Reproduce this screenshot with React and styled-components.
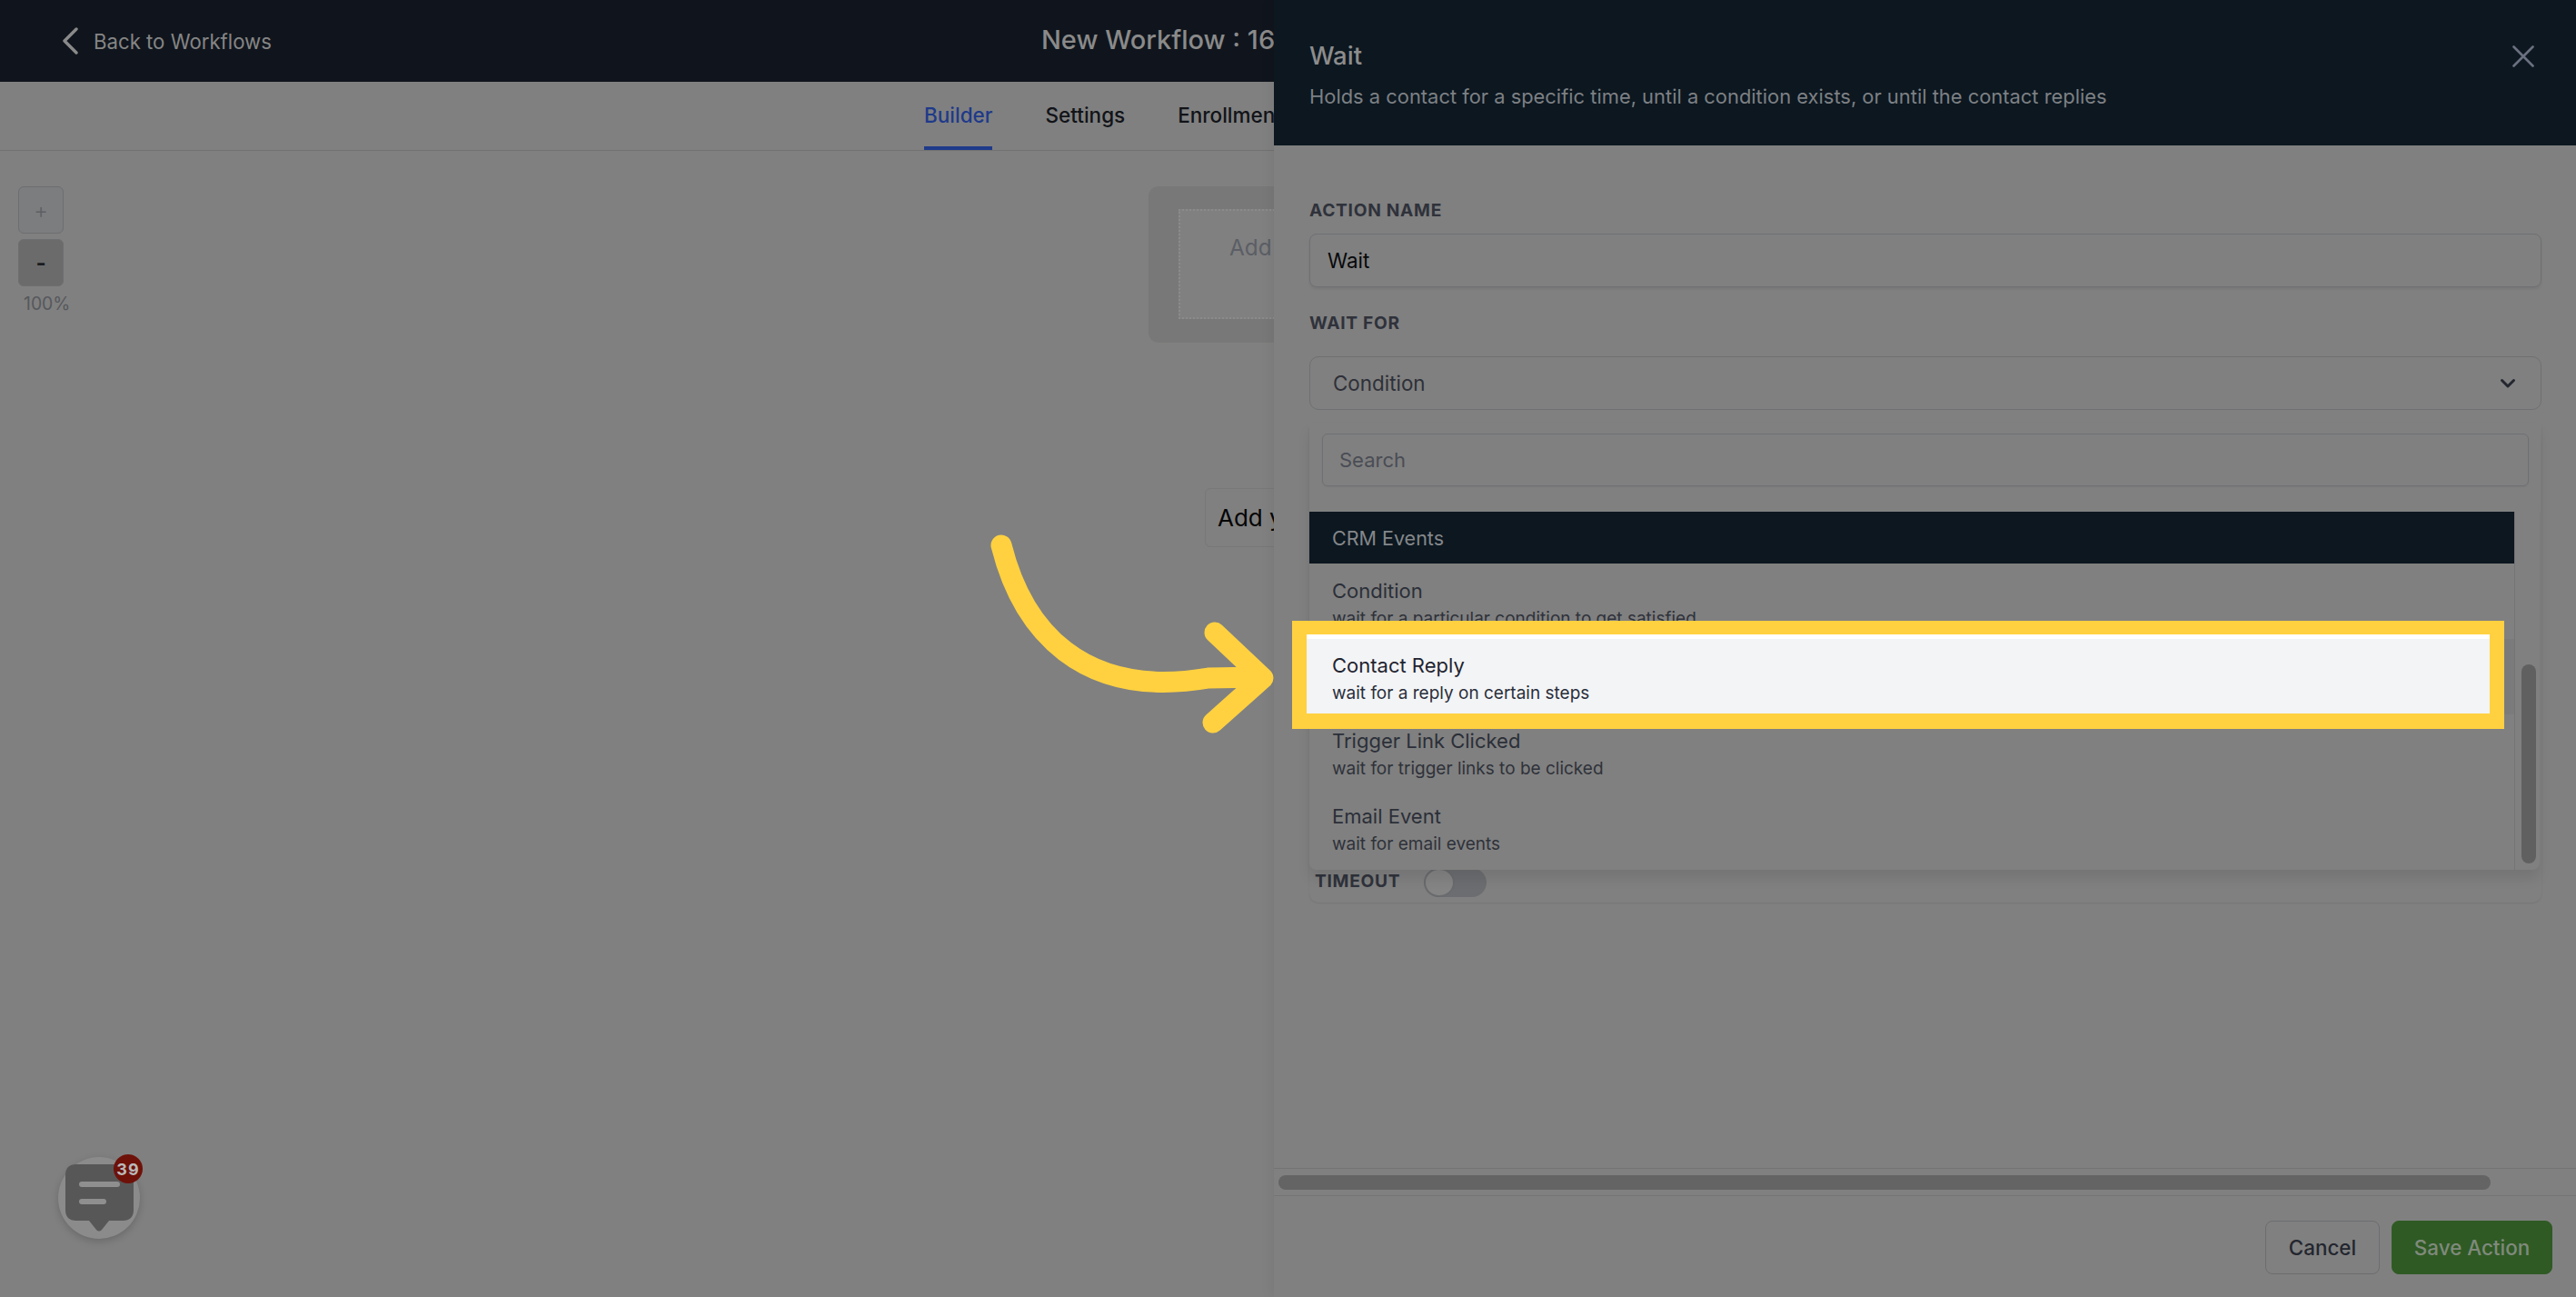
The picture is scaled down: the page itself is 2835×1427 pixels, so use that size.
import React from "react";
import styled, { createGlobalStyle } from "styled-components";

const dim = "#808080";
const navy = "#0c1720";
const ink = "#2b2f38";
const line = "#6f7074";
const yellow = "#ffd140";

const GlobalStyle = createGlobalStyle`
    html, body {
        margin: 0;
        padding: 0;
        background: ${dim};
        overflow: hidden;
    }
    * {
        box-sizing: border-box;
    }
    body {
        font-family: Inter, "Liberation Sans", sans-serif;
    }
`;

const Page = styled.div`
    position: relative;
    display: flex;
    width: 2835px;
    height: 1427px;
    overflow: hidden;
    background: ${dim};
`;

/* left side: the builder, cut off by the drawer */
const Builder = styled.div`
    position: relative;
    display: flex;
    flex-direction: column;
    flex: 0 0 1402px;
    overflow: hidden;
    white-space: nowrap;
`;
const TopBar = styled.div`
    display: flex;
    align-items: center;
    flex: 0 0 90px;
    padding-left: 68px;
    background: #10151d;
`;
const BackLink = styled.div`
    display: flex;
    align-items: center;
    gap: 17px;
    font-size: 22.2px;
    color: #858585;
`;
const WorkflowName = styled.div`
    margin-left: 847px;
    margin-top: -4px;
    font-size: 29px;
    font-weight: 500;
    color: #8a8a8a;
`;
const Tabs = styled.div`
    display: flex;
    flex: 0 0 76px;
    gap: 58px;
    padding-left: 1017px;
    border-bottom: 1px solid #717171;
`;
const Tab = styled.div`
    display: flex;
    align-items: center;
    height: 75px;
    margin-bottom: -1px;
    padding-top: 2px;
    font-size: 22.5px;
    font-weight: 500;
    color: ${props => props.active ? "#1e3a8a" : "#111318"};
    border-bottom: 4px solid ${props => props.active ? "#1e3a8a" : "transparent"};
`;
const Canvas = styled.div`
    position: relative;
    flex: 1;
    display: flex;
    flex-direction: column;
    align-items: flex-start;
    padding: 39px 0 0 20px;
`;
const ZoomButton = styled.div`
    display: flex;
    align-items: center;
    justify-content: center;
    width: 50px;
    height: 52px;
    margin-bottom: 6px;
    border: 1px solid #6d6e70;
    border-radius: 6px;
    font-size: 24px;
    font-weight: ${props => props.active ? 700 : 300};
    color: ${props => props.active ? "#1a1c20" : "#5d5f63"};
    background: ${props => props.active ? "#6b6b6c" : "#7c7d7f"};
`;
const ZoomLabel = styled.div`
    margin: 1px 0 0 6px;
    font-size: 19.4px;
    color: #56585c;
`;
const StartNode = styled.div`
    position: absolute;
    left: 1264px;
    top: 39px;
    width: 220px;
    height: 172px;
    padding: 25px 33px;
    border-radius: 11px;
    background: #787879;
`;
const StartInner = styled.div`
    height: 121px;
    padding: 25px 0 0 54px;
    border: 2px dotted #8b8b8c;
    font-size: 24.3px;
    color: #5b5e65;
    background: #808080;
`;
const AddAction = styled.div`
    position: absolute;
    left: 1326px;
    top: 371px;
    width: 140px;
    height: 65px;
    display: flex;
    align-items: center;
    padding-left: 13px;
    border: 1px solid #787878;
    border-radius: 6px;
    font-size: 26px;
    color: #050505;
`;

/* right side: the drawer */
const Drawer = styled.div`
    display: flex;
    flex-direction: column;
    flex: 1;
    height: 1427px;
    background: ${dim};
    box-shadow: -4px 0 12px rgba(0, 0, 0, 0.05);
    z-index: 1;
`;
const DrawerHead = styled.div`
    position: relative;
    flex: 0 0 160px;
    padding: 43px 39px 0;
    background: ${navy};
`;
const DrawerTitle = styled.div`
    font-size: 27.5px;
    font-weight: 500;
    line-height: 36px;
    color: #8c8c8c;
`;
const DrawerSub = styled.div`
    margin-top: 11px;
    font-size: 21.9px;
    line-height: 32px;
    color: #7d8084;
`;
const CloseIcon = styled.svg`
    position: absolute;
    right: 46px;
    top: 50px;
`;
const DrawerBody = styled.div`
    flex: 1;
    padding: 59px 38px 0 39px;
`;
const FieldLabel = styled.div`
    margin-bottom: ${props => props.gap}px;
    font-size: 19.2px;
    font-weight: 700;
    line-height: 24px;
    letter-spacing: 0.7px;
    color: #2f323b;
`;
const TextField = styled.div`
    display: flex;
    align-items: center;
    height: 59px;
    margin-bottom: 27px;
    padding-left: 19px;
    border: 1px solid ${line};
    border-radius: 8px;
    font-size: 22.4px;
    color: #08090b;
    box-shadow: 0 2px 3px rgba(0, 0, 0, 0.08);
`;
const SelectWrap = styled.div`
    position: relative;
`;
const SelectBox = styled.div`
    display: flex;
    align-items: center;
    justify-content: space-between;
    height: 59px;
    padding: 0 27px 0 25px;
    border: 1px solid ${line};
    border-radius: 10px;
    font-size: 22.4px;
    color: #2e3038;
`;
const Dropdown = styled.div`
    position: absolute;
    left: 0;
    right: 2px;
    top: 73px;
    height: 492px;
    display: flex;
    border-radius: 0 0 8px 8px;
    background: ${dim};
    box-shadow: 0 10px 14px rgba(0, 0, 0, 0.09);
    z-index: 2;
`;
const DropdownList = styled.div`
    flex: 1;
    display: flex;
    flex-direction: column;
    min-width: 0;
`;
const SearchRow = styled.div`
    display: flex;
    flex-direction: column;
    flex: 0 0 98px;
    width: 1355px;
    padding: 12px 0 0 14px;
    background: ${dim};
    z-index: 1;
`;
const SearchBox = styled.div`
    display: flex;
    align-items: center;
    height: 58px;
    margin-right: 13px;
    padding-left: 18px;
    border: 1px solid ${line};
    border-radius: 6px;
    font-size: 22px;
    color: #4a4d55;
    box-shadow: 0 1px 2px rgba(0, 0, 0, 0.06);
`;
const GroupHead = styled.div`
    display: flex;
    align-items: center;
    flex: 0 0 57px;
    padding-left: 25px;
    font-size: 21.5px;
    color: #84878a;
    background: ${navy};
`;
const Option = styled.div`
    position: relative;
    flex: 0 0 83px;
    padding: ${props => props.first ? 17 : 16}px 0 0 25px;
    background: ${props => props.hover ? "#7b7b7b" : "transparent"};
`;
const OptionTitle = styled.div`
    position: relative;
    font-size: 22px;
    line-height: 27px;
    color: ${props => props.lit ? "#1f2430" : ink};
`;
const OptionHint = styled.div`
    position: relative;
    margin-top: 5px;
    font-size: 19px;
    line-height: 24px;
    color: ${props => props.lit ? "#2a2f3b" : "#2f323a"};
`;
/* tutorial highlight that sits over the hovered row */
const Spotlight = styled.div`
    position: absolute;
    left: -19px;
    top: -20px;
    width: 1334px;
    height: 119px;
    border: solid ${yellow};
    border-width: 15px 16px 17px;
    background: #f3f4f6;
    box-shadow: inset 0 5px 0 #ffffff;
`;
const ScrollTrack = styled.div`
    flex: 0 0 27px;
    margin-top: 98px;
    padding: 168px 4px 0 7px;
    border-left: 1px solid #747474;
`;
const ScrollThumb = styled.div`
    width: 16px;
    height: 219px;
    border-radius: 8px;
    background: #606060;
`;
const TimeoutCard = styled.div`
    display: flex;
    align-items: flex-end;
    gap: 26px;
    height: 524px;
    margin-top: 18px;
    padding: 0 0 6px 6px;
    border-radius: 0 0 10px 10px;
    box-shadow: 0 1px 2px rgba(0, 0, 0, 0.09);
    font-size: 19.2px;
    font-weight: 700;
    letter-spacing: 0.7px;
    color: #2f323b;
`;
const TimeoutLabel = styled.div`
    margin-bottom: 6px;
`;
const ToggleTrack = styled.div`
    display: flex;
    width: 69px;
    height: 32px;
    border-radius: 16px;
    background: #6c6d70;
`;
const ToggleKnob = styled.div`
    width: 34px;
    height: 32px;
    border: 2px solid #6a6b6e;
    border-radius: 50%;
    background: #848484;
`;
const HScrollTrack = styled.div`
    flex: 0 0 31px;
    padding: 7px 0 0 5px;
    border-top: 1px solid #747474;
    border-bottom: 1px solid #747474;
`;
const HScrollThumb = styled.div`
    width: 1334px;
    height: 16px;
    border-radius: 8px;
    background: #646464;
`;
const Footer = styled.div`
    display: flex;
    justify-content: flex-end;
    gap: 13px;
    flex: 0 0 111px;
    padding: 27px 26px 0 0;
`;
const Button = styled.div`
    display: flex;
    align-items: center;
    justify-content: center;
    width: ${props => props.width}px;
    height: 59px;
    border-radius: 8px;
    border: 1px solid ${props => props.primary ? "#2f5a24" : "#6c6d70"};
    font-size: 22.4px;
    font-weight: 500;
    color: ${props => props.primary ? "#7f8a7c" : "#23262f"};
    background: ${props => props.primary ? "#2f5a24" : "transparent"};
`;

/* overlays */
const ArrowMark = styled.svg`
    position: absolute;
    left: 1080px;
    top: 570px;
    z-index: 3;
`;
const ChatWidget = styled.div`
    position: absolute;
    left: 64px;
    top: 1273px;
    width: 90px;
    height: 90px;
    border-radius: 50%;
    background: #8b8b8b;
    box-shadow: 0 3px 8px rgba(0, 0, 0, 0.18);
    z-index: 3;
`;
const ChatBadge = styled.div`
    position: absolute;
    left: 61px;
    top: -3px;
    width: 32px;
    height: 32px;
    display: flex;
    align-items: center;
    justify-content: center;
    border-radius: 50%;
    font-size: 18px;
    font-weight: 700;
    letter-spacing: 1px;
    color: #b9b9b9;
    background: #6e1109;
`;

const options = [
    { title: "Condition", hint: "wait for a particular condition to get satisfied", first: true },
    { title: "Contact Reply", hint: "wait for a reply on certain steps", lit: true },
    { title: "Trigger Link Clicked", hint: "wait for trigger links to be clicked" },
    { title: "Email Event", hint: "wait for email events" },
];

export default function App() {
    return (
        <Page>
            <GlobalStyle />
            <Builder>
                <TopBar>
                    <BackLink>
                        <svg width="18" height="30" viewBox="0 0 18 30" fill="none">
                            <path d="M16 2 L3 15 L16 28" stroke="#8a8a8a" strokeWidth="3.4" strokeLinecap="round" strokeLinejoin="round" />
                        </svg>
                        Back to Workflows
                    </BackLink>
                    <WorkflowName>New Workflow : 1650</WorkflowName>
                </TopBar>
                <Tabs>
                    <Tab active>Builder</Tab>
                    <Tab>Settings</Tab>
                    <Tab>Enrollment History</Tab>
                </Tabs>
                <Canvas>
                    <ZoomButton>+</ZoomButton>
                    <ZoomButton active>-</ZoomButton>
                    <ZoomLabel>100%</ZoomLabel>
                    <StartNode>
                        <StartInner>Add New</StartInner>
                    </StartNode>
                    <AddAction>Add your</AddAction>
                </Canvas>
            </Builder>

            <Drawer>
                <DrawerHead>
                    <DrawerTitle>Wait</DrawerTitle>
                    <DrawerSub>Holds a contact for a specific time, until a condition exists, or until the contact replies</DrawerSub>
                    <CloseIcon width="24" height="24" viewBox="0 0 24 24" fill="none">
                        <path d="M1.5 1.5 L22.5 22.5 M22.5 1.5 L1.5 22.5" stroke="#6b7080" strokeWidth="2.6" strokeLinecap="round" />
                    </CloseIcon>
                </DrawerHead>
                <DrawerBody>
                    <FieldLabel gap={14}>ACTION NAME</FieldLabel>
                    <TextField>Wait</TextField>
                    <FieldLabel gap={25}>WAIT FOR</FieldLabel>
                    <SelectWrap>
                        <SelectBox>
                            Condition
                            <svg width="18" height="12" viewBox="0 0 18 12" fill="none">
                                <path d="M2.5 2.5 L9 9 L15.5 2.5" stroke="#23262f" strokeWidth="3" strokeLinecap="round" strokeLinejoin="round" />
                            </svg>
                        </SelectBox>
                        <Dropdown>
                            <DropdownList>
                                <SearchRow>
                                    <SearchBox>Search</SearchBox>
                                </SearchRow>
                                <GroupHead>CRM Events</GroupHead>
                                {options.map(o => (
                                    <Option key={o.title} first={o.first} hover={o.lit}>
                                        {o.lit && <Spotlight />}
                                        <OptionTitle lit={o.lit}>{o.title}</OptionTitle>
                                        <OptionHint lit={o.lit}>{o.hint}</OptionHint>
                                    </Option>
                                ))}
                            </DropdownList>
                            <ScrollTrack>
                                <ScrollThumb />
                            </ScrollTrack>
                        </Dropdown>
                    </SelectWrap>
                    <TimeoutCard>
                        <TimeoutLabel>TIMEOUT</TimeoutLabel>
                        <ToggleTrack>
                            <ToggleKnob />
                        </ToggleTrack>
                    </TimeoutCard>
                </DrawerBody>
                <HScrollTrack>
                    <HScrollThumb />
                </HScrollTrack>
                <Footer>
                    <Button width={126}>Cancel</Button>
                    <Button primary width={177}>Save Action</Button>
                </Footer>
            </Drawer>

            <ArrowMark width="340" height="250" viewBox="1080 570 340 250" fill="none">
                <path d="M1102 600 C1125 692 1190 770 1330 746 L1388 745" stroke={yellow} strokeWidth="23" strokeLinecap="round" />
                <path d="M1337 696 L1390 746 L1335 795" stroke={yellow} strokeWidth="23" strokeLinecap="round" strokeLinejoin="round" />
            </ArrowMark>

            <ChatWidget>
                <svg width="90" height="90" viewBox="0 0 90 90" fill="none">
                    <path d="M20 8 H72 Q83 8 83 19 V58 Q83 70 71 70 H56 L48 80 Q45 83 42 80 L34 70 H20 Q8 70 8 58 V20 Q8 8 20 8 Z" fill="#575757" />
                    <path d="M26 30 H65 M26 49 H50" stroke="#8f8f8f" strokeWidth="6" strokeLinecap="round" />
                </svg>
                <ChatBadge>39</ChatBadge>
            </ChatWidget>
        </Page>
    );
}
